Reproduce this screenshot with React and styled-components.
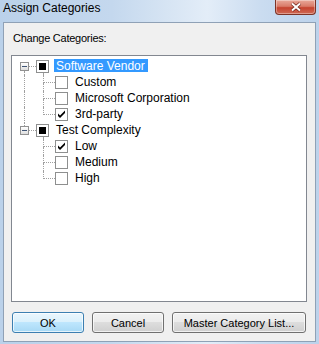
import React from "react";
import styled, { createGlobalStyle } from "styled-components";

const GlobalStyle = createGlobalStyle`
  html, body {
    margin: 0;
    padding: 0;
    background: #ffffff;
  }
  body {
    font-family: "Liberation Sans", Arial, sans-serif;
  }
`;

const Window = styled.div`
  width: 319px;
  height: 344px;
  box-sizing: border-box;
  display: flex;
  flex-direction: column;
  padding-bottom: 2px;
  background: linear-gradient(
    to right,
    #bad1ea 0%,
    #c4d8ee 35%,
    #d9e6f4 55%,
    #e3edf8 65%,
    #cadcf0 82%,
    #bcd2eb 100%
  );
`;

const TitleBar = styled.div`
  height: 22px;
  flex-shrink: 0;
  display: flex;
  justify-content: space-between;
  align-items: flex-start;
  padding-left: 3px;
`;

const Title = styled.div`
  font-size: 12px;
  line-height: 15px;
  padding-top: 1px;
  color: #000;
`;

const CloseButton = styled.div`
  width: 41px;
  height: 15px;
  box-sizing: border-box;
  margin-right: 3px;
  display: flex;
  align-items: center;
  justify-content: center;
  border: 1px solid #7d3326;
  border-top: none;
  border-radius: 0 0 4px 4px;
  background: linear-gradient(
    to bottom,
    #e9a99a 0%,
    #d97b69 45%,
    #c5432f 55%,
    #cf6a55 100%
  );
  box-shadow: inset 0 0 0 1px rgba(255, 255, 255, 0.35);
`;

const Client = styled.div`
  flex: 1;
  margin: 0 3px;
  display: flex;
  flex-direction: column;
  padding: 7px 8px 0 7px;
  border: 1px solid #8fa1b6;
  background: #f0f0f0;
`;

const Label = styled.div`
  font-size: 11px;
  line-height: 16px;
  margin-left: 2px;
  letter-spacing: -0.25px;
  color: #000;
`;

const Tree = styled.div`
  height: 247px;
  box-sizing: border-box;
  margin-top: 9px;
  padding-top: 3px;
  border: 1px solid #828790;
  background: #fff;
`;

const Row = styled.div`
  height: 16px;
  display: flex;
  align-items: flex-start;
`;

const Lead = styled.div`
  width: 24px;
  height: 16px;
  flex-shrink: 0;
  display: flex;
  align-items: flex-start;
`;

const ExpanderColumn = styled.div`
  margin-left: 8px;
  width: 9px;
  height: 16px;
  display: flex;
  flex-direction: column;
`;

const VStub = styled.div`
  width: 0;
  margin-left: ${(p) => p.$left ?? 4}px;
  height: ${(p) => (p.$height ? `${p.$height}px` : "auto")};
  flex: ${(p) => (p.$height ? "none" : 1)};
  border-left: 1px dotted ${(p) => (p.$on ? "#a0a0a0" : "transparent")};
`;

const Expander = styled.div`
  width: 9px;
  height: 9px;
  box-sizing: border-box;
  display: flex;
  align-items: center;
  justify-content: center;
  border: 1px solid #919191;
  background: linear-gradient(to bottom, #ffffff, #dedede);
  &::after {
    content: "";
    width: 5px;
    height: 1px;
    background: #3f5576;
  }
`;

const HDots = styled.div`
  width: 7px;
  height: 7px;
  border-bottom: 1px dotted #a0a0a0;
`;

const Guide = styled.div`
  width: 0;
  height: 16px;
  margin-left: 12px;
  border-left: 1px dotted ${(p) => (p.$on ? "#a0a0a0" : "transparent")};
`;

const Elbow = styled.div`
  width: 19px;
  height: 16px;
  flex-shrink: 0;
  display: flex;
  flex-direction: column;
`;

const ElbowTop = styled.div`
  width: 11px;
  height: 7px;
  margin-left: 7px;
  border-left: 1px dotted #a0a0a0;
  border-bottom: 1px dotted #a0a0a0;
`;

const CheckColumn = styled.div`
  width: 13px;
  height: 16px;
  flex-shrink: 0;
  display: flex;
  flex-direction: column;
`;

const Box = styled.div`
  width: 13px;
  height: 13px;
  margin-top: 1px;
  box-sizing: border-box;
  display: flex;
  align-items: center;
  justify-content: center;
  border: 1px solid #8e8f8f;
  background: #fff;
`;

const Mixed = styled.div`
  width: 7px;
  height: 7px;
  background: #000;
`;

const ItemText = styled.div`
  margin-left: 5px;
  padding: 0 3px 0 2px;
  height: 13px;
  font-size: 12px;
  line-height: 15px;
  white-space: nowrap;
  color: ${(p) => (p.$selected ? "#fff" : "#000")};
  background: ${(p) => (p.$selected ? "#3399ff" : "transparent")};
`;

const ButtonRow = styled.div`
  display: flex;
  gap: 8px;
  margin-top: 10px;
  padding-left: 1px;
`;

const Button = styled.button`
  width: ${(p) => p.$width}px;
  height: 21px;
  box-sizing: border-box;
  padding: 0;
  font-family: "Liberation Sans", Arial, sans-serif;
  font-size: 11px;
  color: #000;
  border-radius: 3px;
  border: 1px solid ${(p) => (p.$default ? "#3c7fb1" : "#707070")};
  background: ${(p) =>
    p.$default
      ? "linear-gradient(to bottom, #eaf6fd 0%, #d9f0fc 50%, #bee6fd 50%, #a7d9f5 100%)"
      : "linear-gradient(to bottom, #f2f2f2 0%, #ebebeb 50%, #dddddd 50%, #cfcfcf 100%)"};
  box-shadow: inset 0 0 0 1px rgba(255, 255, 255, 0.7);
`;

const Check = () => (
  <svg width="11" height="11" viewBox="1 1 11 11">
    <polygon points="3,5.5 5,7.5 10,2.5 10,5 5,10 3,8" fill="#000" />
  </svg>
);

const CloseGlyph = () => (
  <svg width="12" height="10" viewBox="0 0 12 10">
    <path d="M2 1.5 L10 8.5 M10 1.5 L2 8.5" stroke="#6e2418" strokeWidth="3.4" />
    <path d="M2 1.5 L10 8.5 M10 1.5 L2 8.5" stroke="#fff" strokeWidth="2" />
  </svg>
);

const tree = [
  {
    label: "Software Vendor",
    selected: true,
    children: [
      { label: "Custom" },
      { label: "Microsoft Corporation" },
      { label: "3rd-party", checked: true },
    ],
  },
  {
    label: "Test Complexity",
    children: [
      { label: "Low", checked: true },
      { label: "Medium" },
      { label: "High" },
    ],
  },
];

const App = () => {
  return (
    <Window>
      <GlobalStyle />
      <TitleBar>
        <Title>Assign Categories</Title>
        <CloseButton>
          <CloseGlyph />
        </CloseButton>
      </TitleBar>
      <Client>
        <Label>Change Categories:</Label>
        <Tree>
          {tree.map((node, i) => {
            const first = i === 0;
            const last = i === tree.length - 1;
            return (
              <React.Fragment key={node.label}>
                <Row>
                  <Lead>
                    <ExpanderColumn>
                      <VStub $height={3} $on={!first} />
                      <Expander />
                      <VStub $on={!last} />
                    </ExpanderColumn>
                    <HDots />
                  </Lead>
                  <CheckColumn>
                    <Box>
                      <Mixed />
                    </Box>
                    <VStub $left={7} $on />
                  </CheckColumn>
                  <ItemText $selected={node.selected}>{node.label}</ItemText>
                </Row>
                {node.children.map((child, j) => (
                  <Row key={child.label}>
                    <Lead>
                      <Guide $on={!last} />
                    </Lead>
                    <Elbow>
                      <ElbowTop />
                      <VStub $left={7} $on={j < node.children.length - 1} />
                    </Elbow>
                    <CheckColumn>
                      <Box>{child.checked && <Check />}</Box>
                    </CheckColumn>
                    <ItemText>{child.label}</ItemText>
                  </Row>
                ))}
              </React.Fragment>
            );
          })}
        </Tree>
        <ButtonRow>
          <Button $width={72} $default>
            OK
          </Button>
          <Button $width={72}>Cancel</Button>
          <Button $width={134}>Master Category List...</Button>
        </ButtonRow>
      </Client>
    </Window>
  );
};

export default App;
